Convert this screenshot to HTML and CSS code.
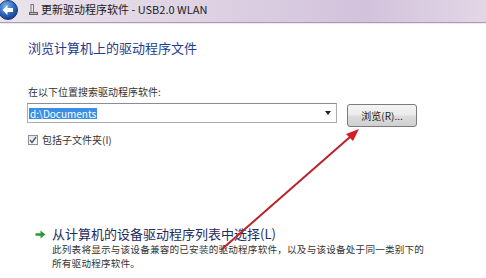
FILE: index.html
```html
<!DOCTYPE html>
<html lang="zh-CN">
<head>
<meta charset="utf-8">
<link rel="stylesheet" href="styles.css">
</head>
<body>
<div class="window">
  <div class="titlebar">
    <span class="back">
      <svg width="20" height="20" viewBox="0 0 20 20">
        <defs>
          <radialGradient id="bg" cx="40%" cy="30%" r="70%">
            <stop offset="0" stop-color="#7fb2ea"/>
            <stop offset="0.6" stop-color="#2f68c0"/>
            <stop offset="1" stop-color="#163f8a"/>
          </radialGradient>
        </defs>
        <circle cx="10" cy="10" r="9.5" fill="url(#bg)" stroke="#1b3d78" stroke-width="1"/>
        <path d="M4.5 10 L9.5 5 L9.5 8 L15 8 L15 12 L9.5 12 L9.5 15 Z" fill="#ffffff"/>
      </svg>
    </span>
    <span class="title-icon">
      <svg width="9" height="11" viewBox="0 0 9 11">
        <rect x="2" y="0.5" width="2.5" height="8" fill="#e8e8e8" stroke="#777" stroke-width="1"/>
        <rect x="0.5" y="8.5" width="8" height="2" fill="#bbb" stroke="#666" stroke-width="1"/>
      </svg>
    </span>
    <span class="title">更新驱动程序软件 - USB2.0 WLAN</span>
  </div>

  <div class="content">
    <h1 class="heading">浏览计算机上的驱动程序文件</h1>

    <div class="label">在以下位置搜索驱动程序软件:</div>
    <div class="path-row">
      <div class="combo">
        <span class="selected">d:\Documents</span>
        <span class="drop"></span>
      </div>
      <button class="browse">浏览(R)...</button>
    </div>

    <label class="check-row">
      <span class="checkbox">
        <svg width="8" height="8" viewBox="0 0 8 8"><path d="M1 4 L3 6.5 L7 1" fill="none" stroke="#4a5f7c" stroke-width="1.4"/></svg>
      </span>
      <span>包括子文件夹(I)</span>
    </label>

    <div class="option">
      <span class="go">
        <svg width="11" height="9" viewBox="0 0 11 9"><path d="M0.5 3.2 H5.5 V0.5 L10.5 4.5 L5.5 8.5 V5.8 H0.5 Z" fill="#2f9a35"/></svg>
      </span>
      <span class="option-title">从计算机的设备驱动程序列表中选择(L)</span>
    </div>
    <p class="option-desc">此列表将显示与该设备兼容的已安装的驱动程序软件，以及与该设备处于同一类别下的<br>所有驱动程序软件。</p>
  </div>

  <svg class="annot" width="486" height="278" viewBox="0 0 486 278">
    <line x1="221" y1="250" x2="350" y2="137" stroke="#b8232a" stroke-width="2"/>
    <path d="M359 129 L346 134 L353 141 Z" fill="#d21f26"/>
  </svg>
</div>
</body>
</html>
```

FILE: styles.css
```css
* { box-sizing: border-box; }
html, body { margin: 0; padding: 0; background: #ffffff; }
body {
  width: 486px;
  height: 278px;
  overflow: hidden;
  font-family: "Noto Sans CJK SC", "Noto Sans", sans-serif;
  color: #333;
}
.window { position: relative; width: 486px; height: 278px; }

.titlebar {
  height: 23px;
  display: flex;
  align-items: center;
  background: linear-gradient(to right, #ebe4ec 0%, #ddd0e2 45%, #d2c2dc 75%, #e3d6e6 100%);
  border-bottom: 1px solid #a99bb3;
  box-shadow: 0 1px 0 #efe8f0;
}
.back { display: flex; margin-left: -2px; margin-top: -2px; }
.title-icon { display: flex; margin-left: 11px; margin-top: -4px; }
.title {
  margin-left: 3px;
  font-size: 11px;
  line-height: 14px;
  color: #1b1b1b;
  margin-top: -4px;
}

.content { padding-left: 28px; }
.heading {
  margin: 17px 0 0 0;
  font-size: 13px;
  line-height: 16px;
  font-weight: normal;
  color: #1f3b8f;
}
.label {
  margin-top: 29px;
  font-size: 10px;
  line-height: 14px;
  color: #333;
}
.path-row {
  display: flex;
  align-items: flex-start;
  gap: 10px;
  margin-top: 4px;
  margin-left: -1px;
}
.combo {
  width: 310px;
  height: 20px;
  border: 1px solid #abadb3;
  border-top-color: #8a8c92;
  display: flex;
  align-items: center;
  padding-left: 1px;
  position: relative;
}
.selected {
  background: #3a8ee6;
  color: #fff;
  font-size: 10px;
  line-height: 11px;
  padding: 0 1px;
}
.drop {
  margin-left: auto;
  margin-right: 5px;
  width: 0;
  height: 0;
  border-left: 3px solid transparent;
  border-right: 3px solid transparent;
  border-top: 4px solid #222;
}
.browse {
  margin-top: 1px;
  width: 70px;
  height: 23px;
  border: 1px solid #7b7b7b;
  border-radius: 3px;
  background: linear-gradient(to bottom, #f4f4f4 0%, #ebebeb 48%, #dcdcdc 52%, #d0d0d0 100%);
  font-family: "Noto Sans CJK SC", "Noto Sans", sans-serif;
  font-size: 10px;
  color: #222;
  padding: 0;
}
.check-row {
  display: flex;
  align-items: center;
  gap: 4px;
  margin-top: 6px;
  height: 14px;
  font-size: 10px;
  line-height: 14px;
  color: #333;
}
.checkbox {
  width: 10px;
  height: 10px;
  border: 1px solid #8e8f8f;
  background: linear-gradient(#e6e6e6, #fafafa);
  display: flex;
  align-items: center;
  justify-content: center;
}
.option {
  display: flex;
  align-items: center;
  margin-top: 78px;
  margin-left: 7px;
  height: 18px;
}
.go { display: flex; }
.option-title {
  margin-left: 6px;
  font-size: 13px;
  line-height: 18px;
  color: #1e2b5c;
}
.option-desc {
  margin: -1px 0 0 24px;
  font-size: 9.6px;
  line-height: 14px;
  letter-spacing: 0.2px;
  color: #333;
  white-space: nowrap;
}
.annot { position: absolute; left: 0; top: 0; pointer-events: none; }
```
